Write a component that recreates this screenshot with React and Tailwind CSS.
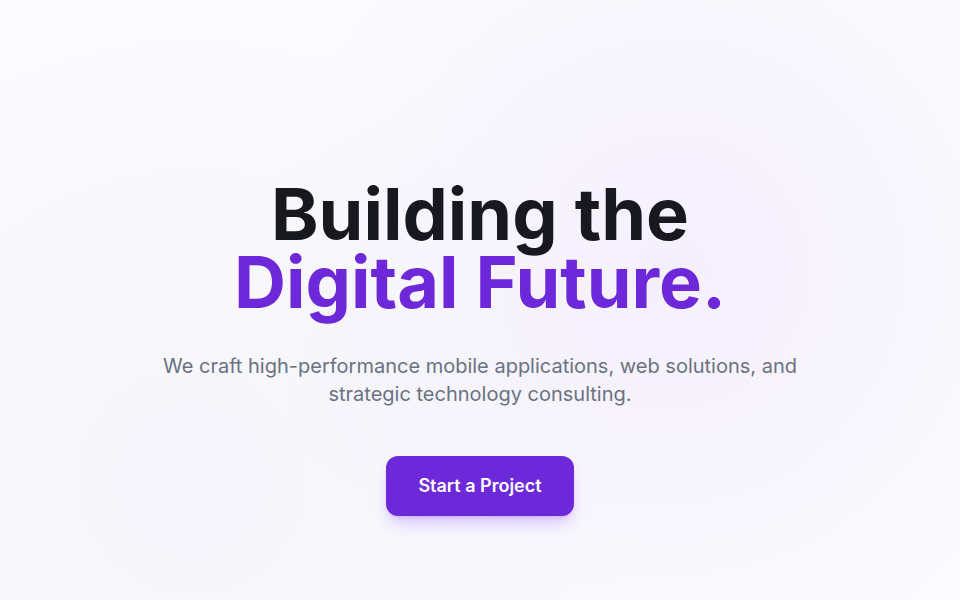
import React from "react";

const App = () => {
    return (
        <div
            className="relative w-full h-[600px] overflow-hidden bg-[#fbfbfd]"
            style={{ fontFamily: "Inter, 'Noto Sans', sans-serif" }}
        >
            <div className="absolute inset-0 bg-[radial-gradient(circle_at_70%_45%,rgba(236,225,255,0.45),transparent_55%),radial-gradient(circle_at_20%_80%,rgba(240,240,250,0.6),transparent_50%)]" />
            <section className="relative h-full flex flex-col items-center justify-center pt-24 text-center">
                <h1 className="text-[72px] leading-[68px] font-bold">
                    <span className="block text-[#17191f]">Building the</span>
                    <span className="block text-[#6d28d9]">Digital Future.</span>
                </h1>
                <p className="mt-9 max-w-[650px] text-xl leading-7 text-gray-500">
                    We craft high-performance mobile applications, web solutions, and strategic technology consulting.
                </p>
                <button className="mt-12 px-8 py-4 rounded-xl bg-[#6d28d9] text-white text-lg leading-7 font-semibold shadow-lg shadow-violet-500/30">
                    Start a Project
                </button>
            </section>
        </div>
    );
};

export default App;
